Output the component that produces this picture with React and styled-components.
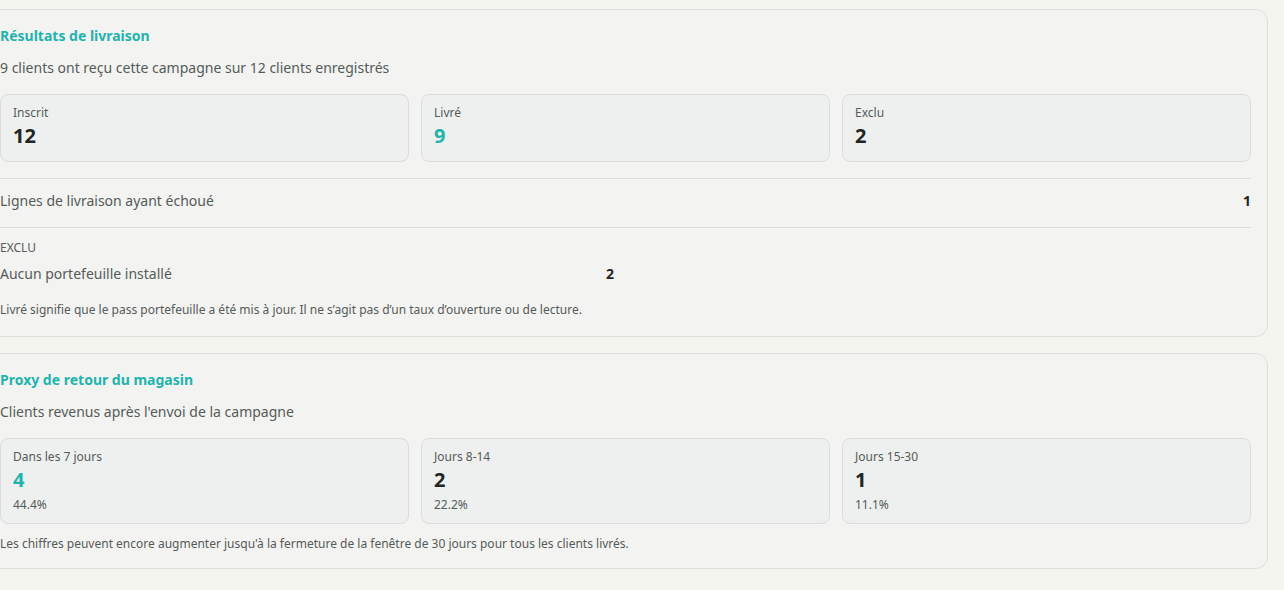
import styled, { createGlobalStyle } from 'styled-components';

const GlobalStyle = createGlobalStyle`
   * {
      box-sizing: border-box;
   }
   body {
      margin: 0;
      background: #f5f5f0;
      font-family: 'Noto Sans', 'Open Sans', sans-serif;
      color: #2a2d2c;
      overflow: hidden;
   }
`;

const Page = styled.div`
   display: flex;
   flex-direction: column;
   gap: 16px;
   padding: 9px 16px 20px 0;
   margin-left: -17px;
`;

const Panel = styled.section`
   background: #f3f3f1;
   border: 1px solid #dfe0dc;
   border-radius: 12px;
   padding: 16px 16px ${(p) => (p.$tight ? '16px' : '18px')};
`;

const Title = styled.h3`
   margin: 0;
   font-size: 14px;
   line-height: 20px;
   font-weight: 700;
   color: #1fb3ae;
`;

const Subtitle = styled.p`
   margin: 12px 0 16px;
   font-size: 14px;
   line-height: 20px;
   color: #555b59;
`;

const StatGrid = styled.div`
   display: grid;
   grid-template-columns: repeat(3, 1fr);
   gap: 12px;
`;

const StatCard = styled.div`
   background: #edf0ef;
   border: 1px solid #dadddb;
   border-radius: 8px;
   padding: 10px 12px 10px;
`;

const StatLabel = styled.div`
   font-size: 12px;
   line-height: 16px;
   color: #555b59;
`;

const StatValue = styled.div`
   font-size: 20px;
   line-height: 30px;
   font-weight: 700;
   color: ${(p) => (p.$accent ? '#1fb3ae' : '#222524')};
`;

const StatSub = styled.div`
   margin-top: 2px;
   font-size: 12px;
   line-height: 16px;
   color: #555b59;
`;

const Divider = styled.div`
   margin-top: 16px;
   border-top: 1px solid #dddedb;
`;

const Row = styled.div`
   display: flex;
   justify-content: space-between;
   align-items: center;
   padding: 12px 0 16px;
   border-bottom: 1px solid #dddedb;
   font-size: 14px;
   line-height: 20px;
   color: #555b59;
   max-width: ${(p) => p.$max || 'none'};
   ${(p) => p.$plain && 'border-bottom: none; padding: 0;'}
`;

const RowValue = styled.span`
   font-size: 14px;
   font-weight: 700;
   color: #222524;
`;

const GroupLabel = styled.div`
   margin: 12px 0 8px;
   font-size: 12px;
   line-height: 16px;
   text-transform: uppercase;
   color: #555b59;
`;

const Note = styled.p`
   margin: ${(p) => p.$top || '18px'} 0 0;
   font-size: 12px;
   line-height: 16px;
   color: #555b59;
`;

const deliveryStats = [
   { label: 'Inscrit', value: 12 },
   { label: 'Livré', value: 9, accent: true },
   { label: 'Exclu', value: 2 },
];

const returnStats = [
   { label: 'Dans les 7 jours', value: 4, pct: '44.4%', accent: true },
   { label: 'Jours 8-14', value: 2, pct: '22.2%' },
   { label: 'Jours 15-30', value: 1, pct: '11.1%' },
];

const Stat = ({ stat }) => (
   <StatCard>
      <StatLabel>{stat.label}</StatLabel>
      <StatValue $accent={stat.accent}>{stat.value}</StatValue>
      {stat.pct && <StatSub>{stat.pct}</StatSub>}
   </StatCard>
);

const App = () => (
   <>
      <GlobalStyle />
      <Page>
         <Panel>
            <Title>Résultats de livraison</Title>
            <Subtitle>9 clients ont reçu cette campagne sur 12 clients enregistrés</Subtitle>
            <StatGrid>
               {deliveryStats.map((s) => (
                  <Stat key={s.label} stat={s} />
               ))}
            </StatGrid>
            <Divider />
            <Row>
               <span>Lignes de livraison ayant échoué</span>
               <RowValue>1</RowValue>
            </Row>
            <GroupLabel>Exclu</GroupLabel>
            <Row $plain $max="614px">
               <span>Aucun portefeuille installé</span>
               <RowValue>2</RowValue>
            </Row>
            <Note>
               Livré signifie que le pass portefeuille a été mis à jour. Il ne s’agit pas d’un taux
               d’ouverture ou de lecture.
            </Note>
         </Panel>
         <Panel $tight>
            <Title>Proxy de retour du magasin</Title>
            <Subtitle>Clients revenus après l'envoi de la campagne</Subtitle>
            <StatGrid>
               {returnStats.map((s) => (
                  <Stat key={s.label} stat={s} />
               ))}
            </StatGrid>
            <Note $top="12px">
               Les chiffres peuvent encore augmenter jusqu'à la fermeture de la fenêtre de 30 jours
               pour tous les clients livrés.
            </Note>
         </Panel>
      </Page>
   </>
);

export default App;
